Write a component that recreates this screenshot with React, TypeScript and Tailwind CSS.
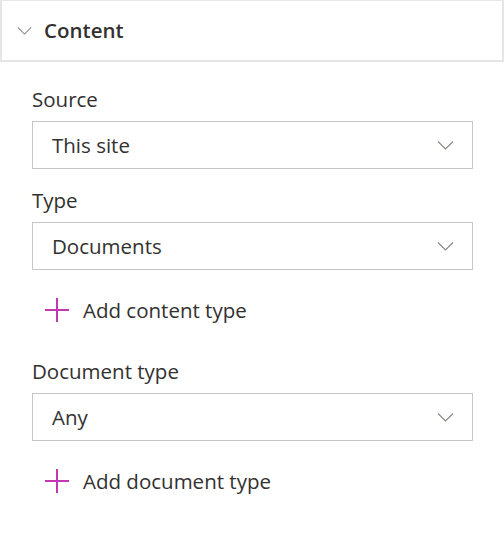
const font = { fontFamily: '"Open Sans", "Noto Sans", sans-serif' };

function Chevron({ className }: { className?: string }) {
  return (
    <svg viewBox="0 0 16 9" className={className} fill="none" stroke="currentColor" strokeWidth="1.2">
      <path d="M0.5 0.5 L8 8 L15.5 0.5" />
    </svg>
  );
}

function Plus() {
  return (
    <svg viewBox="0 0 24 24" className="h-6 w-6 text-[#c239b3]" fill="none" stroke="currentColor" strokeWidth="2">
      <path d="M12 0 V24 M0 12 H24" />
    </svg>
  );
}

function Dropdown({ label, value }: { label: string; value: string }) {
  return (
    <div className="flex flex-col">
      <label className="text-[20.5px] leading-[26px] text-[#323130]">{label}</label>
      <div className="mt-[9px] flex h-[48px] items-center justify-between border border-[#c8c6c4] pl-[19px] pr-[18px]">
        <span className="text-[20.5px] text-[#323130]">{value}</span>
        <Chevron className="h-[9px] w-[17px] text-[#8a8886]" />
      </div>
    </div>
  );
}

function AddLink({ label }: { label: string }) {
  return (
    <button type="button" className="flex h-6 items-center gap-[14px] pl-[13px] text-left">
      <Plus />
      <span className="text-[20.5px] text-[#323130]">{label}</span>
    </button>
  );
}

export default function App() {
  return (
    <div className="min-h-[537px] w-[504px] bg-white" style={font}>
      <div className="flex h-[62px] items-center border-x-2 border-y border-[#e6e6e6] border-b-2 pl-[15px]">
        <Chevron className="h-[8px] w-[15px] text-[#8a8886]" />
        <span className="ml-[12px] text-[20.5px] font-semibold text-[#323130]">Content</span>
      </div>
      <div className="flex flex-col pl-[32px] pr-[31px] pt-[24px]">
        <Dropdown label="Source" value="This site" />
        <div className="mt-[18px]">
          <Dropdown label="Type" value="Documents" />
        </div>
        <div className="mt-[28px]">
          <AddLink label="Add content type" />
        </div>
        <div className="mt-[36px]">
          <Dropdown label="Document type" value="Any" />
        </div>
        <div className="mt-[28px]">
          <AddLink label="Add document type" />
        </div>
      </div>
    </div>
  );
}
